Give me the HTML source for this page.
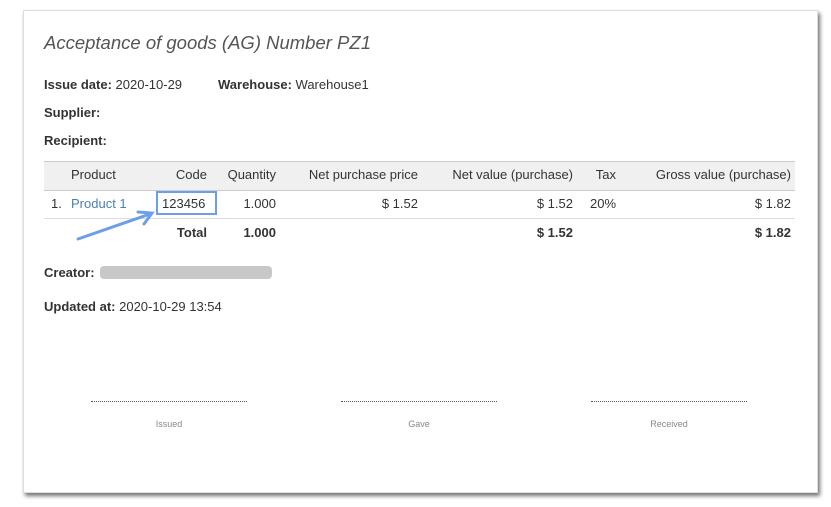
<!DOCTYPE html>
<html><head><style>
body{margin:0;width:831px;height:507px;background:#fff;font-family:"Liberation Sans",Arial,sans-serif;position:relative;overflow:hidden}
.page{position:absolute;left:23px;top:10px;width:793px;height:481px;background:#fff;border:1px solid #ddd;box-shadow:2px 3px 4px rgba(0,0,0,.55)}
.t{position:absolute;font-size:13px;color:#333;white-space:nowrap}
b{font-weight:bold}
h1{position:absolute;left:44px;top:32px;margin:0;font-size:18.5px;font-style:italic;font-weight:normal;color:#555}
.hdr{position:absolute;left:44px;top:161px;width:751px;height:28px;background:#f0f0f0;border-top:1px solid #ccc;border-bottom:1px solid #ccc}
.line{position:absolute;left:44px;top:218px;width:751px;border-top:1px solid #ddd}
.r{text-align:right}
.sig{position:absolute;top:401px;width:156px;border-top:1px dotted #555}
.sl{position:absolute;top:419px;font-size:9px;color:#888;width:156px;text-align:center}
</style></head><body>
<div class="page"></div>
<h1>Acceptance of goods (AG) Number PZ1</h1>
<div class="t" style="left:44px;top:77px"><b>Issue date:</b> 2020-10-29</div>
<div class="t" style="left:218px;top:77px"><b>Warehouse:</b> Warehouse1</div>
<div class="t" style="left:44px;top:105px"><b>Supplier:</b></div>
<div class="t" style="left:44px;top:133px"><b>Recipient:</b></div>
<div class="hdr"></div>
<div class="line"></div>
<div class="t" style="left:71px;top:167px">Product</div>
<div class="t r" style="right:624px;top:167px">Code</div>
<div class="t r" style="right:555px;top:167px">Quantity</div>
<div class="t r" style="right:413px;top:167px">Net purchase price</div>
<div class="t r" style="right:258px;top:167px">Net value (purchase)</div>
<div class="t r" style="right:215px;top:167px">Tax</div>
<div class="t r" style="right:40px;top:167px">Gross value (purchase)</div>
<div class="t" style="left:51px;top:196px">1.</div>
<div class="t" style="left:71px;top:196px;color:#4a7fb5">Product 1</div>
<div style="position:absolute;left:156px;top:191px;width:57px;height:20px;border:2px solid #6d9eeb"></div>
<div class="t" style="left:162px;top:196px">123456</div>
<div class="t r" style="right:555px;top:196px">1.000</div>
<div class="t r" style="right:413px;top:196px">$ 1.52</div>
<div class="t r" style="right:258px;top:196px">$ 1.52</div>
<div class="t" style="left:590px;top:196px">20%</div>
<div class="t r" style="right:40px;top:196px">$ 1.82</div>
<div class="t r" style="right:624px;top:225px"><b>Total</b></div>
<div class="t r" style="right:555px;top:225px"><b>1.000</b></div>
<div class="t r" style="right:258px;top:225px"><b>$ 1.52</b></div>
<div class="t r" style="right:40px;top:225px"><b>$ 1.82</b></div>
<svg style="position:absolute;left:0;top:0" width="831" height="507"><path d="M78 239 L150 214 M138 212 L152 213 L144 224" stroke="#6d9eeb" stroke-width="3" fill="none" stroke-linecap="round"/></svg>
<div class="t" style="left:44px;top:265px"><b>Creator:</b></div>
<div style="position:absolute;left:100px;top:266px;width:172px;height:13px;background:#c8c8c8;border-radius:4px"></div>
<div class="t" style="left:44px;top:299px"><b>Updated at:</b> 2020-10-29 13:54</div>
<div class="sig" style="left:91px"></div><div class="sl" style="left:91px">Issued</div>
<div class="sig" style="left:341px"></div><div class="sl" style="left:341px">Gave</div>
<div class="sig" style="left:591px"></div><div class="sl" style="left:591px">Received</div>
</body></html>
